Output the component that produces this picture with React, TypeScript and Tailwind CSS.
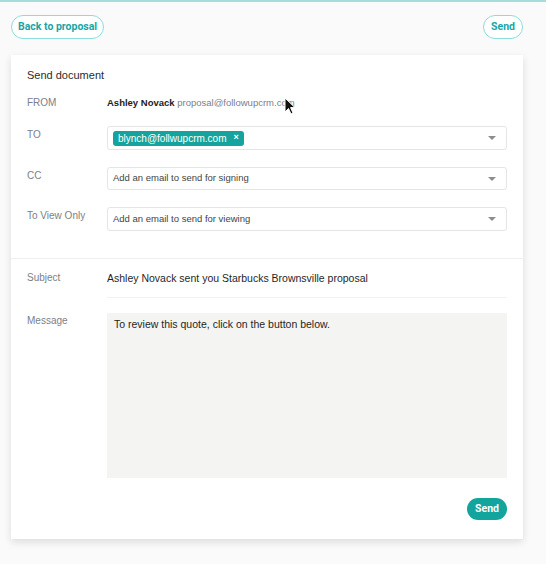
import React from "react";

const font = { fontFamily: "'Liberation Sans', Arial, sans-serif" };

function Caret() {
  return (
    <svg width="8" height="4" viewBox="0 0 8 4" className="shrink-0">
      <path d="M0 0 L8 0 L4 4 Z" fill="#8a8d91" />
    </svg>
  );
}

function Field({ label, children }: { label: string; children: React.ReactNode }) {
  return (
    <div className="flex">
      <div className="w-20 shrink-0 pt-[2px] text-[10px] leading-[14px] text-[#7b8089]">{label}</div>
      <div className="flex-1">{children}</div>
    </div>
  );
}

function SelectBox({ children, h = "h-6" }: { children: React.ReactNode; h?: string }) {
  return (
    <div className={`${h} flex items-center justify-between rounded-[3px] border border-[#e3e5e8] bg-white pl-[5px] pr-[10px]`}>
      <div className="flex items-center">{children}</div>
      <Caret />
    </div>
  );
}

export default function App() {
  return (
    <div className="relative min-h-[564px] border-t-2 border-[#a5dcdc] bg-[#fafafa]" style={font}>
      <div className="mx-[11px] flex w-[512px] justify-between pt-[13px]">
        <button
          type="button"
          className="h-6 rounded-full border border-[#8ddcdc] bg-white px-[6px] text-[10.5px] font-bold text-[#16a6a6]"
          style={{ fontFamily: "Roboto, sans-serif" }}
        >
          Back to proposal
        </button>
        <button
          type="button"
          className="h-6 rounded-full border border-[#8ddcdc] bg-white px-[7px] text-[10.5px] font-bold text-[#16a6a6]"
          style={{ fontFamily: "Roboto, sans-serif" }}
        >
          Send
        </button>
      </div>

      <div className="mx-[11px] mt-4 w-[512px] bg-white shadow-[0_3px_8px_rgba(0,0,0,0.12)]">
        <div className="px-4 pt-3 pb-[27px]">
          <div className="text-[11px] leading-4 text-[#2b2b2b]">Send document</div>

          <div className="mt-[13px] flex leading-[14px]">
            <div className="w-20 shrink-0 text-[10px] text-[#7b8089]">FROM</div>
            <div className="text-[9.5px]">
              <span className="font-bold text-[#222]">Ashley Novack</span>{" "}
              <span className="text-[#7b8089]">proposal@followupcrm.com</span>
            </div>
          </div>

          <div className="mt-4 flex flex-col gap-[17px]">
            <Field label="TO">
              <SelectBox>
                <span className="flex h-[15px] items-center gap-[7px] rounded-[3px] bg-[#14a49d] px-[5px] text-[10px] text-white">
                  blynch@follwupcrm.com
                  <span className="text-[9px] font-bold">×</span>
                </span>
              </SelectBox>
            </Field>
            <Field label="CC">
              <SelectBox h="h-[23px]">
                <span className="text-[9.5px] text-[#444]">Add an email to send for signing</span>
              </SelectBox>
            </Field>
            <Field label="To View Only">
              <SelectBox>
                <span className="text-[9.5px] text-[#444]">Add an email to send for viewing</span>
              </SelectBox>
            </Field>
          </div>
        </div>

        <div className="border-t border-[#eeeff1] px-4 pt-3 pb-[19px]">
          <div className="flex leading-[14px]">
            <div className="w-20 shrink-0 text-[10px] text-[#7b8089]">Subject</div>
            <div className="flex-1 border-b border-[#f1f2f3] pb-3 text-[10.5px] text-[#1f1f1f]">
              Ashley Novack sent you Starbucks Brownsville proposal
            </div>
          </div>

          <div className="mt-[15px] flex leading-[14px]">
            <div className="w-20 shrink-0 pt-px text-[10px] text-[#7b8089]">Message</div>
            <div className="h-[165px] flex-1 bg-[#f4f4f3] px-[7px] pt-[4px] text-[10.5px] text-[#1f1f1f]">
              To review this quote, click on the button below.
            </div>
          </div>

          <div className="mt-5 flex justify-end">
            <button
              type="button"
              className="h-[22px] rounded-full bg-[#12a59e] px-[8px] text-[10.5px] font-bold text-white"
              style={{ fontFamily: "Roboto, sans-serif" }}
            >
              Send
            </button>
          </div>
        </div>
      </div>

      <svg className="absolute left-[284px] top-[95px]" width="12" height="18" viewBox="0 0 12 18">
        <path d="M1 1 L1 15 L4.5 11.5 L7 17 L9 16 L6.6 10.6 L11 10.6 Z" fill="#111" stroke="#fff" strokeWidth="1" />
      </svg>
    </div>
  );
}
